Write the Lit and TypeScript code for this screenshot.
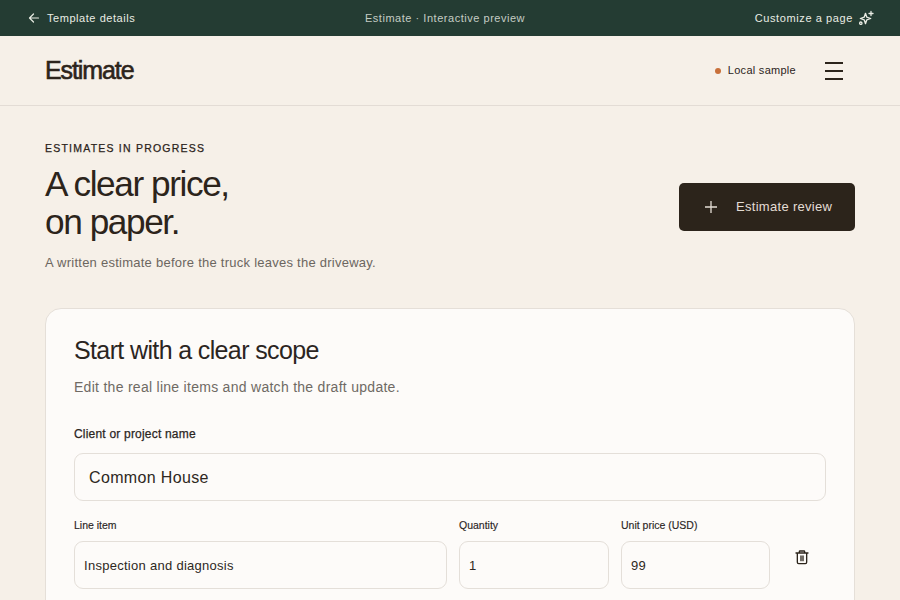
import { LitElement, html, css } from "lit";
import { customElement } from "lit/decorators.js";

@customElement("app-root")
export class AppRoot extends LitElement {
  static styles = css`
    :host { display: block; height: 600px; overflow: hidden; background: #f6f0e8; color: #2c241b; font-family: "Liberation Sans", Arial, sans-serif; }
    * { box-sizing: border-box; }
    .topbar { height: 36px; background: #243c33; color: #e9ece4; display: flex; justify-content: space-between; align-items: center; padding: 0 26px 0 28px; font-size: 11px; letter-spacing: 0.55px; }
    .tb-left { display: flex; align-items: center; gap: 7px; }
    .tb-center { color: #c5ccc4; letter-spacing: 0.53px; }
    .tb-right { display: flex; align-items: center; gap: 5px; letter-spacing: 0.6px; }
    .header { height: 70px; border-bottom: 1px solid #e3dcd5; padding: 0 45px; display: flex; align-items: center; justify-content: space-between; }
    .logo { font-size: 25px; letter-spacing: -1.1px; -webkit-text-stroke: 0.6px #2c241b; }
    .hdr-right { display: flex; align-items: center; }
    .dot { width: 6px; height: 6px; border-radius: 50%; background: #c8703a; margin-right: 7px; margin-top: 1px; }
    .sample { font-size: 11px; letter-spacing: 0.28px; margin-right: 29px; margin-top: -2px; }
    .menu { display: flex; flex-direction: column; gap: 6px; width: 18px; margin-right: 12px; }
    .menu span { height: 2px; background: #2c241b; }
    .hero { display: flex; justify-content: space-between; align-items: center; padding: 35px 45px 0; }
    .eyebrow { font-size: 10.5px; letter-spacing: 1.22px; line-height: 14px; -webkit-text-stroke: 0.25px #2c241b; }
    h1 { margin: 10px 0 0; font-size: 35.2px; line-height: 38px; font-weight: 400; letter-spacing: -1.41px; }
    .sub { margin: 13px 0 0; font-size: 13px; line-height: 18px; color: #6c6660; letter-spacing: 0.25px; }
    .cta { width: 176px; height: 48px; background: #2c241b; color: #e4ddd5; border-radius: 5px; display: flex; align-items: center; padding-left: 25px; gap: 18px; font-size: 13px; letter-spacing: 0.3px; }
    .card { margin: 36px 45px 0; height: 320px; background: #fdfbf9; border: 1px solid #e5dfd8; border-radius: 16px; padding: 25px 28px; }
    h2 { margin: 0; font-size: 25px; line-height: 32px; font-weight: 400; letter-spacing: -0.63px; color: #2b251f; }
    .lead { margin: 11px 0 0; font-size: 14px; line-height: 20px; color: #6f6a64; letter-spacing: 0.28px; }
    .lbl-name { margin-top: 29px; font-size: 12px; line-height: 16px; letter-spacing: 0.2px; -webkit-text-stroke: 0.25px #2b251f; color: #2b251f; }
    .name { margin-top: 11px; height: 48px; border: 1px solid #e4dfd9; border-radius: 9px; padding: 1px 14px 0; display: flex; align-items: center; font-size: 16px; letter-spacing: 0.35px; color: #2e2822; }
    .grid { margin-top: 16px; display: grid; grid-template-columns: 373px 150px 149px 44px; column-gap: 12px; align-items: start; }
    .lbl { font-size: 10.5px; line-height: 16px; color: #2b251f; -webkit-text-stroke: 0.15px #2b251f; }
    .field { margin-top: 8px; height: 48px; border: 1px solid #e4dfd9; border-radius: 9px; padding: 0 9px; display: flex; align-items: center; font-size: 13px; letter-spacing: 0.28px; color: #2e2822; }
    .trash { display: flex; justify-content: center; align-items: center; margin-top: 20px; width: 40px; height: 40px; }
  `;

  render() {
    return html`
      <div class="topbar">
        <div class="tb-left">
          <svg width="12" height="12" viewBox="0 0 12 12" fill="none" stroke="#e9ece4" stroke-width="1.2" stroke-linecap="round" stroke-linejoin="round"><path d="M10.5 6H1.8M5.5 2 1.5 6l4 4"/></svg>
          <span>Template details</span>
        </div>
        <div class="tb-center">Estimate · Interactive preview</div>
        <div class="tb-right">
          <span>Customize a page</span>
          <svg width="16" height="16" viewBox="0 0 16 16" fill="none" stroke="#e9ece4" stroke-width="1.3" stroke-linecap="round" stroke-linejoin="round"><path d="M7.500 3.300 8.800 7.200 12.700 8.500 8.800 9.800 7.500 13.700 6.200 9.800 2.300 8.500 6.200 7.200Z"/><path d="M13 1.500v4M11 3.500h4"/><circle cx="2.800" cy="13.200" r="1.200"/></svg>
        </div>
      </div>
      <div class="header">
        <div class="logo">Estimate</div>
        <div class="hdr-right">
          <span class="dot"></span><span class="sample">Local sample</span>
          <div class="menu"><span></span><span></span><span></span></div>
        </div>
      </div>
      <div class="hero">
        <div>
          <div class="eyebrow">ESTIMATES IN PROGRESS</div>
          <h1>A clear price,<br />on paper.</h1>
          <p class="sub">A written estimate before the truck leaves the driveway.</p>
        </div>
        <div class="cta">
          <svg width="14" height="14" viewBox="0 0 14 14" stroke="#e4ddd5" stroke-width="1.3" fill="none"><path d="M7 1v12M1 7h12"/></svg>
          <span>Estimate review</span>
        </div>
      </div>
      <div class="card">
        <h2>Start with a clear scope</h2>
        <p class="lead">Edit the real line items and watch the draft update.</p>
        <div class="lbl-name">Client or project name</div>
        <div class="name">Common House</div>
        <div class="grid">
          <div><div class="lbl">Line item</div><div class="field">Inspection and diagnosis</div></div>
          <div><div class="lbl">Quantity</div><div class="field">1</div></div>
          <div><div class="lbl">Unit price (USD)</div><div class="field">99</div></div>
          <div class="trash">
            <svg width="16" height="16" viewBox="0 0 24 24" fill="none" stroke="#2c241b" stroke-width="2" stroke-linecap="round" stroke-linejoin="round"><path d="M3 6h18M8 6V4a1 1 0 0 1 1-1h6a1 1 0 0 1 1 1v2M19 6v14a2 2 0 0 1-2 2H7a2 2 0 0 1-2-2V6M10.500 10.500v7M13.500 10.500v7"/></svg>
          </div>
        </div>
      </div>
    `;
  }
}
